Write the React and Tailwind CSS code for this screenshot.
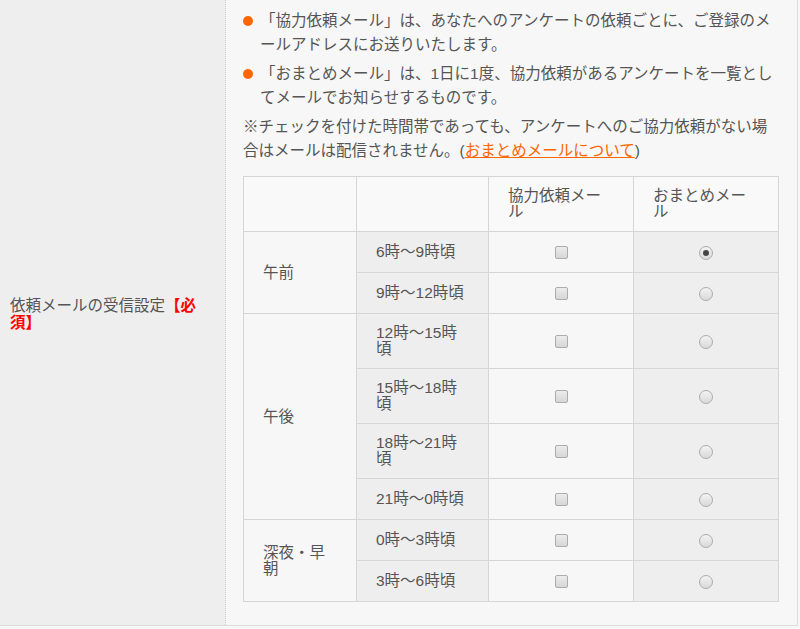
import React from 'react';

const groups = [
  { label: '午前', slots: ['6時～9時頃', '9時～12時頃'] },
  { label: '午後', slots: ['12時～15時頃', '15時～18時頃', '18時～21時頃', '21時～0時頃'] },
  { label: '深夜・早朝', slots: ['0時～3時頃', '3時～6時頃'] },
];

const Checkbox = () => (
  <span className="inline-block w-[13px] h-[13px] rounded-[2px] border border-[#acacac] bg-gradient-to-b from-[#ececec] to-[#d6d6d6] align-middle" />
);

const Radio = ({ checked }) => (
  <span className="inline-flex w-[14px] h-[14px] rounded-full border border-[#acacac] bg-gradient-to-b from-[#f3f3f3] to-[#d9d9d9] items-center justify-center align-middle">
    {checked && <span className="w-[6px] h-[6px] rounded-full bg-[#444]" />}
  </span>
);

const Bullet = ({ children }) => (
  <div className="flex">
    <span className="w-[10px] h-[10px] rounded-full bg-[#ff6600] mt-[7px] mr-[7px] shrink-0" />
    <p className="flex-1">{children}</p>
  </div>
);

const App = () => {
  return (
    <div className="min-h-screen bg-[#f7f7f7] text-[#555] font-[family-name:'Liberation_Sans','Noto_Sans_CJK_JP',sans-serif]">
      <div className="flex w-[798px] h-[626px] border-b border-[#dcdcdc]">
        {/* Label column */}
        <div className="w-[226px] shrink-0 bg-[#eeeeee] border-r border-dotted border-[#cfcfcf] flex items-center pl-[10px] pr-5 text-[15.5px] leading-[17px]">
          <p className="pt-[2px]">
            依頼メールの受信設定<span className="text-[#ff0000] font-bold">【必須】</span>
          </p>
        </div>

        {/* Content column */}
        <div className="flex-1 border-r border-[#dcdcdc] pl-[17px] pr-[18px] pt-[9px] text-[15.5px] leading-[24px]">
          <div className="space-y-[5px]">
            <Bullet>「協力依頼メール」は、あなたへのアンケートの依頼ごとに、ご登録のメールアドレスにお送りいたします。</Bullet>
            <Bullet>「おまとめメール」は、1日に1度、協力依頼があるアンケートを一覧としてメールでお知らせするものです。</Bullet>
            <p>
              ※チェックを付けた時間帯であっても、アンケートへのご協力依頼がない場合はメールは配信されません。(
              <a href="#" className="text-[#ff6600] underline">おまとめメールについて</a>)
            </p>
          </div>

          <table className="mt-[13px] w-[535px] border-collapse table-fixed text-[15.5px] leading-[16px]">
            <colgroup>
              <col className="w-[113px]" />
              <col className="w-[132px]" />
              <col className="w-[145px]" />
              <col className="w-[145px]" />
            </colgroup>
            <thead>
              <tr className="h-[55px]">
                <th className="border border-[#d6d6d6] bg-[#f9f9f9]" />
                <th className="border border-[#d6d6d6] bg-[#f9f9f9]" />
                <th className="border border-[#d6d6d6] bg-[#f9f9f9] pl-[19px] pr-5 text-left font-normal align-middle">協力依頼メール</th>
                <th className="border border-[#d6d6d6] bg-[#f9f9f9] pl-[19px] pr-5 text-left font-normal align-middle">おまとめメール</th>
              </tr>
            </thead>
            <tbody>
              {groups.map((g, gi) =>
                g.slots.map((slot, si) => {
                  const twoLine = slot.length > 7;
                  return (
                    <tr key={slot} className={twoLine ? 'h-[55px]' : 'h-[41px]'}>
                      {si === 0 && (
                        <td rowSpan={g.slots.length} className="border border-[#d6d6d6] bg-[#f7f7f7] pl-[19px] pr-5 align-middle">
                          {g.label}
                        </td>
                      )}
                      <td className="border border-[#d6d6d6] bg-[#eeeeee] pl-[19px] pr-5 py-[11px] align-middle">{slot}</td>
                      <td className="border border-[#d6d6d6] bg-[#f7f7f7] text-center align-middle">
                        <Checkbox />
                      </td>
                      <td className="border border-[#d6d6d6] bg-[#eeeeee] text-center align-middle">
                        <Radio checked={gi === 0 && si === 0} />
                      </td>
                    </tr>
                  );
                })
              )}
            </tbody>
          </table>
        </div>
      </div>
    </div>
  );
};

export default App;
